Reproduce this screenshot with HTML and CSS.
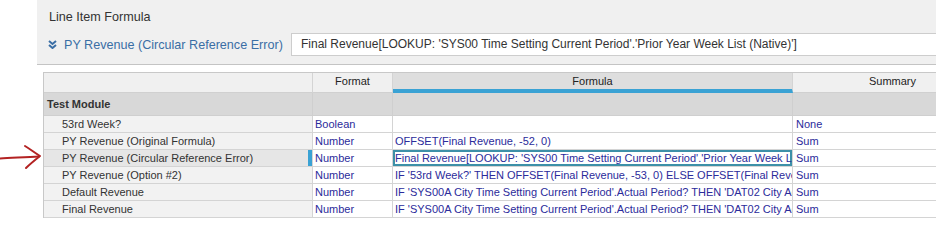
FILE: index.html
```html
<!DOCTYPE html>
<html>
<head>
<meta charset="utf-8">
<link rel="stylesheet" href="styles.css">
</head>
<body>
<div class="page">
  <section class="panel">
    <div class="panel-title">Line Item Formula</div>
    <div class="panel-row">
      <svg class="chev" width="9" height="9" viewBox="0 0 9 9"><path d="M1 1 L4.5 4 L8 1 M1 5 L4.5 8 L8 5" fill="none" stroke="#3a6ea5" stroke-width="2"/></svg>
      <span class="item-name">PY Revenue (Circular Reference Error)</span>
      <div class="formula-input">Final Revenue[LOOKUP: 'SYS00 Time Setting Current Period'.'Prior Year Week List (Native)']</div>
    </div>
  </section>
  <div class="grid-area">
    <div class="gutter">
      <svg class="arrow" width="42" height="28" viewBox="0 0 42 28"><path d="M0 14.5 C12 14 26 13 39 12.5" fill="none" stroke="#b32222" stroke-width="2" stroke-linecap="round"/><path d="M25 2 C30 5 35 9 40 12 C35 16 30 20 26 24" fill="none" stroke="#b32222" stroke-width="2" stroke-linecap="round" stroke-linejoin="round"/></svg>
    </div>
    <div class="grid">
      <div class="row head">
        <div class="cell c-name"></div>
        <div class="cell c-fmt center">Format</div>
        <div class="cell c-formula center active-col">Formula</div>
        <div class="cell c-sum center">Summary</div>
      </div>
      <div class="row module">
        <div class="cell c-name">Test Module</div>
        <div class="cell c-fmt"></div>
        <div class="cell c-formula"></div>
        <div class="cell c-sum"></div>
      </div>
      <div class="row data">
        <div class="cell c-name">53rd Week?</div>
        <div class="cell c-fmt">Boolean</div>
        <div class="cell c-formula"></div>
        <div class="cell c-sum">None</div>
      </div>
      <div class="row data">
        <div class="cell c-name">PY Revenue (Original Formula)</div>
        <div class="cell c-fmt">Number</div>
        <div class="cell c-formula">OFFSET(Final Revenue, -52, 0)</div>
        <div class="cell c-sum">Sum</div>
      </div>
      <div class="row data selected">
        <div class="cell c-name">PY Revenue (Circular Reference Error)</div>
        <div class="cell c-fmt">Number</div>
        <div class="cell c-formula">Final Revenue[LOOKUP: 'SYS00 Time Setting Current Period'.'Prior Year Week List (Native)']</div>
        <div class="cell c-sum">Sum</div>
      </div>
      <div class="row data">
        <div class="cell c-name">PY Revenue (Option #2)</div>
        <div class="cell c-fmt">Number</div>
        <div class="cell c-formula">IF '53rd Week?' THEN OFFSET(Final Revenue, -53, 0) ELSE OFFSET(Final Revenue, -52, 0)</div>
        <div class="cell c-sum">Sum</div>
      </div>
      <div class="row data">
        <div class="cell c-name">Default Revenue</div>
        <div class="cell c-fmt">Number</div>
        <div class="cell c-formula">IF 'SYS00A City Time Setting Current Period'.Actual Period? THEN 'DAT02 City Actuals'.Revenue ELSE 0</div>
        <div class="cell c-sum">Sum</div>
      </div>
      <div class="row data">
        <div class="cell c-name">Final Revenue</div>
        <div class="cell c-fmt">Number</div>
        <div class="cell c-formula">IF 'SYS00A City Time Setting Current Period'.Actual Period? THEN 'DAT02 City Actuals'.Revenue ELSE Default Revenue</div>
        <div class="cell c-sum">Sum</div>
      </div>
    </div>
  </div>
</div>
</body>
</html>
```
FILE: styles.css
```css
html, body {
  margin: 0;
  padding: 0;
  background: #ffffff;
  overflow: hidden;
}
.page {
  width: 936px;
  height: 241px;
  overflow: hidden;
  font-family: "Liberation Sans", Arial, sans-serif;
  color: #333333;
}
.panel {
  margin-left: 37px;
  height: 65px;
  box-sizing: border-box;
  background: #f0f0f0;
  border-bottom: 1px solid #c4c4c4;
  overflow: hidden;
}
.panel-title {
  padding: 10px 0 0 12px;
  font-size: 12.6px;
  line-height: 14px;
  color: #333333;
}
.panel-row {
  display: flex;
  align-items: center;
  margin-top: 9px;
  padding-left: 11px;
}
.chev {
  flex: none;
  width: 9px;
  height: 9px;
}
.item-name {
  flex: none;
  width: 227px;
  margin-left: 7px;
  white-space: nowrap;
  font-size: 12.6px;
  color: #3a6ea5;
}
.formula-input {
  flex: none;
  width: 700px;
  height: 23px;
  box-sizing: border-box;
  border: 1px solid #cdcdcd;
  background: #ffffff;
  padding-left: 9px;
  font-size: 12px;
  line-height: 21px;
  color: #333333;
  white-space: nowrap;
}
.grid-area {
  display: flex;
  margin-top: 7px;
}
.gutter {
  flex: none;
  width: 43px;
}
.arrow {
  display: block;
  margin-top: 72px;
}
.grid {
  flex: none;
  width: 951px;
  border-top: 1px solid #c8c8c8;
  border-left: 1px solid #c8c8c8;
  font-size: 11px;
}
.row {
  display: grid;
  grid-template-columns: 269px 80px 400px 200px;
}
.cell {
  box-sizing: border-box;
  border-right: 1px solid #d4d4d4;
  border-bottom: 1px solid #d4d4d4;
  white-space: nowrap;
  overflow: hidden;
  text-overflow: clip;
}
.center {
  text-align: center;
}
.head .cell {
  height: 20px;
  line-height: 16px;
  background: #f0f0f0;
  color: #222222;
  border-bottom-color: #d0d0d0;
}
.head .active-col {
  background: #dedede;
  border-bottom: 4px solid #3aa2d4;
}
.module .cell {
  height: 23px;
  line-height: 22px;
  background: #d8d8d8;
  border-right-color: #cfcfcf;
  border-bottom-color: #cfcfcf;
}
.module .c-name {
  padding-left: 3px;
  font-weight: bold;
  color: #333333;
}
.data .cell {
  height: 17px;
  line-height: 16px;
  color: #2b2b9b;
  padding-left: 2px;
}
.data .c-name {
  padding-left: 18px;
  background: #f2f2f2;
  color: #333333;
}
.data .c-sum {
  padding-left: 3px;
}
.selected .c-name {
  background: #e6e6e6;
  box-shadow: inset -4px 0 0 #3aa2d4;
}
.selected .c-formula {
  box-shadow: inset 0 0 0 2px #3d90a8;
  line-height: 17px;
}
```
